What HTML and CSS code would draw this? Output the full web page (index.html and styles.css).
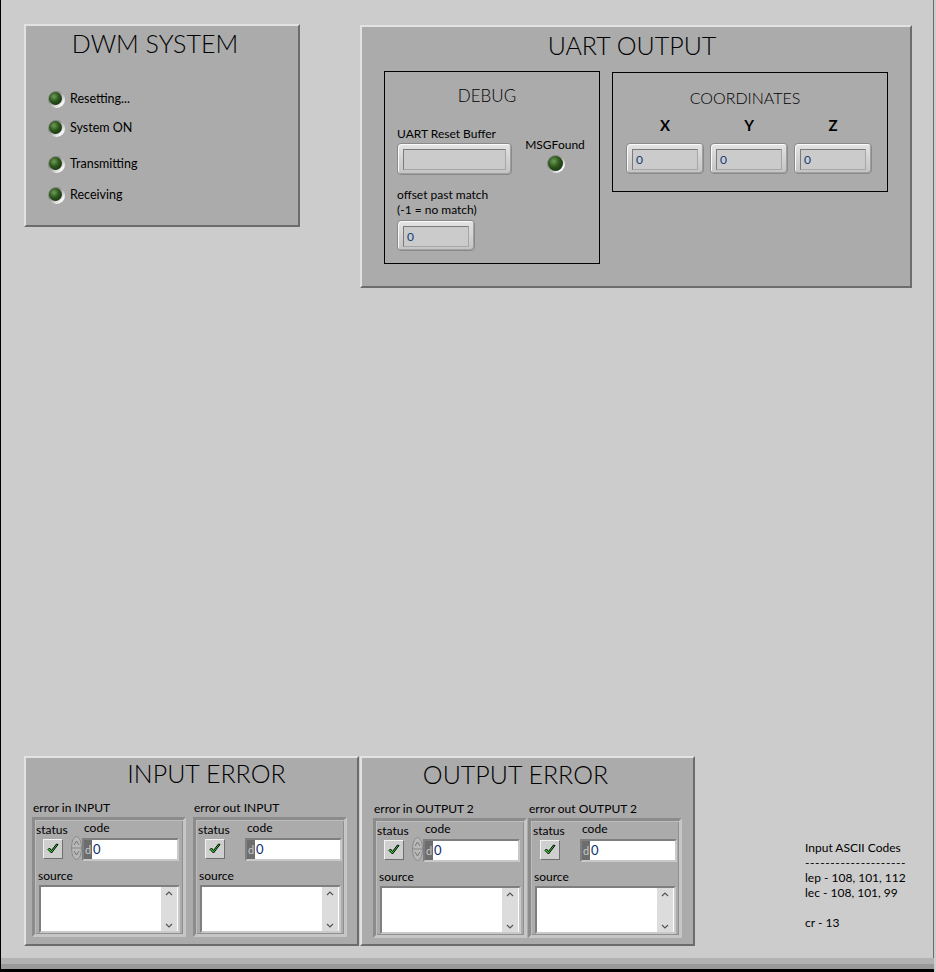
FILE: index.html
```html
<!DOCTYPE html>
<html lang="en">
<head>
<meta charset="utf-8">
<title>DWM System</title>
<link rel="stylesheet" href="styles.css">
</head>
<body>
<div class="window">
  <div class="top-row">
    <section class="deco dwm">
      <h1 class="title dwm-title">DWM SYSTEM</h1>
      <div class="led-row r1"><span class="led"><span class="led-core"></span></span><span class="lbl">Resetting...</span></div>
      <div class="led-row r2"><span class="led"><span class="led-core"></span></span><span class="lbl">System ON</span></div>
      <div class="led-row r3"><span class="led"><span class="led-core"></span></span><span class="lbl">Transmitting</span></div>
      <div class="led-row r4"><span class="led"><span class="led-core"></span></span><span class="lbl">Receiving</span></div>
    </section>

    <section class="deco uart">
      <h1 class="title uart-title">UART OUTPUT</h1>
      <div class="uart-boxes">
        <div class="box debug">
          <h2 class="sub-title debug-title">DEBUG</h2>
          <div class="debug-body">
            <div class="debug-left">
              <div class="lbl">UART Reset Buffer</div>
              <div class="ctl ctl-wide"><div class="ctl-field"></div></div>
              <div class="lbl offset-lbl">offset past match<br>(-1 = no match)</div>
              <div class="ctl ctl-num"><div class="ctl-field"><span class="val">0</span></div></div>
            </div>
            <div class="debug-right">
              <div class="lbl">MSGFound</div>
              <span class="led led-big"><span class="led-core"></span></span>
            </div>
          </div>
        </div>
        <div class="box coords">
          <h2 class="sub-title coord-title">COORDINATES</h2>
          <div class="axis-row">
            <div class="axis"><div class="axis-lbl">X</div><div class="ctl ctl-num"><div class="ctl-field"><span class="val">0</span></div></div></div>
            <div class="axis"><div class="axis-lbl">Y</div><div class="ctl ctl-num"><div class="ctl-field"><span class="val">0</span></div></div></div>
            <div class="axis"><div class="axis-lbl">Z</div><div class="ctl ctl-num"><div class="ctl-field"><span class="val">0</span></div></div></div>
          </div>
        </div>
      </div>
    </section>
  </div>

  <div class="bottom-row">
    <section class="deco err-panel err-in-panel">
      <h1 class="title err-title in-title">INPUT ERROR</h1>
      <div class="clusters">
        <div class="cluster-wrap">
          <div class="lbl cl-lbl">error in INPUT</div>
          <div class="cluster">
            <div class="cl-top">
              <div class="st-col"><div class="lbl">status</div><div class="chk"><svg viewBox="0 0 14 14" width="14" height="14"><path d="M2 7.5 L5.5 11 L12 2.5 L10.5 2 L5.5 8.5 L3.5 6 Z" fill="#22dd22" stroke="#000" stroke-width="1" stroke-linejoin="round"/></svg></div></div>
              <div class="spin"><svg viewBox="0 0 11 24" width="11" height="24"><ellipse cx="5.5" cy="12" rx="5" ry="11.5" fill="#b8b8b8" stroke="#8a8a8a"/><path d="M3 9 L5.5 5 L8 9" fill="none" stroke="#777"/><path d="M3 15 L5.5 19 L8 15" fill="none" stroke="#777"/><line x1="1" y1="12" x2="10" y2="12" stroke="#888"/></svg></div>
              <div class="code-col"><div class="lbl code-lbl">code</div><div class="code-field"><span class="radix">d</span><span class="code-val">0</span></div></div>
            </div>
            <div class="lbl src-lbl">source</div>
            <div class="src-box"><div class="sb"><svg viewBox="0 0 16 47" width="16" height="47"><path d="M5 10 L8 7 L11 10" fill="none" stroke="#555" stroke-width="1.2"/><path d="M5 39 L8 42 L11 39" fill="none" stroke="#555" stroke-width="1.2"/></svg></div></div>
          </div>
        </div>
        <div class="cluster-wrap">
          <div class="lbl cl-lbl">error out INPUT</div>
          <div class="cluster out">
            <div class="cl-top">
              <div class="st-col"><div class="lbl">status</div><div class="chk"><svg viewBox="0 0 14 14" width="14" height="14"><path d="M2 7.5 L5.5 11 L12 2.5 L10.5 2 L5.5 8.5 L3.5 6 Z" fill="#22dd22" stroke="#000" stroke-width="1" stroke-linejoin="round"/></svg></div></div>
              <div class="spin-gap"></div>
              <div class="code-col"><div class="lbl code-lbl">code</div><div class="code-field"><span class="radix">d</span><span class="code-val">0</span></div></div>
            </div>
            <div class="lbl src-lbl">source</div>
            <div class="src-box"><div class="sb"><svg viewBox="0 0 16 47" width="16" height="47"><path d="M5 10 L8 7 L11 10" fill="none" stroke="#555" stroke-width="1.2"/><path d="M5 39 L8 42 L11 39" fill="none" stroke="#555" stroke-width="1.2"/></svg></div></div>
          </div>
        </div>
      </div>
    </section>

    <section class="deco err-panel err-out-panel">
      <h1 class="title err-title out-title">OUTPUT ERROR</h1>
      <div class="clusters">
        <div class="cluster-wrap">
          <div class="lbl cl-lbl">error in OUTPUT 2</div>
          <div class="cluster">
            <div class="cl-top">
              <div class="st-col"><div class="lbl">status</div><div class="chk"><svg viewBox="0 0 14 14" width="14" height="14"><path d="M2 7.5 L5.5 11 L12 2.5 L10.5 2 L5.5 8.5 L3.5 6 Z" fill="#22dd22" stroke="#000" stroke-width="1" stroke-linejoin="round"/></svg></div></div>
              <div class="spin"><svg viewBox="0 0 11 24" width="11" height="24"><ellipse cx="5.5" cy="12" rx="5" ry="11.5" fill="#b8b8b8" stroke="#8a8a8a"/><path d="M3 9 L5.5 5 L8 9" fill="none" stroke="#777"/><path d="M3 15 L5.5 19 L8 15" fill="none" stroke="#777"/><line x1="1" y1="12" x2="10" y2="12" stroke="#888"/></svg></div>
              <div class="code-col"><div class="lbl code-lbl">code</div><div class="code-field"><span class="radix">d</span><span class="code-val">0</span></div></div>
            </div>
            <div class="lbl src-lbl">source</div>
            <div class="src-box"><div class="sb"><svg viewBox="0 0 16 47" width="16" height="47"><path d="M5 10 L8 7 L11 10" fill="none" stroke="#555" stroke-width="1.2"/><path d="M5 39 L8 42 L11 39" fill="none" stroke="#555" stroke-width="1.2"/></svg></div></div>
          </div>
        </div>
        <div class="cluster-wrap">
          <div class="lbl cl-lbl">error out OUTPUT 2</div>
          <div class="cluster out">
            <div class="cl-top">
              <div class="st-col"><div class="lbl">status</div><div class="chk"><svg viewBox="0 0 14 14" width="14" height="14"><path d="M2 7.5 L5.5 11 L12 2.5 L10.5 2 L5.5 8.5 L3.5 6 Z" fill="#22dd22" stroke="#000" stroke-width="1" stroke-linejoin="round"/></svg></div></div>
              <div class="spin-gap"></div>
              <div class="code-col"><div class="lbl code-lbl">code</div><div class="code-field"><span class="radix">d</span><span class="code-val">0</span></div></div>
            </div>
            <div class="lbl src-lbl">source</div>
            <div class="src-box"><div class="sb"><svg viewBox="0 0 16 47" width="16" height="47"><path d="M5 10 L8 7 L11 10" fill="none" stroke="#555" stroke-width="1.2"/><path d="M5 39 L8 42 L11 39" fill="none" stroke="#555" stroke-width="1.2"/></svg></div></div>
          </div>
        </div>
      </div>
    </section>

    <div class="ascii">
      <div>Input ASCII Codes</div>
      <div class="dashes">--------------------</div>
      <div>lep - 108, 101, 112</div>
      <div>lec - 108, 101, 99</div>
      <div>&nbsp;</div>
      <div>cr - 13</div>
    </div>
  </div>

  <div class="footer-bar"></div>
</div>
</body>
</html>
```

FILE: styles.css
```css
* { box-sizing: border-box; }
html, body { margin: 0; padding: 0; background: #cccccc; }
body { font-family: Lato, "Open Sans", sans-serif; color: #000; }

.window {
  width: 936px;
  height: 972px;
  background: #cccccc;
  border-left: 1px solid #000;
  border-right: 2px solid #cccccc;
  box-shadow: inset -1px 0 0 #6a6a6a;
  display: flex;
  flex-direction: column;
}

.deco {
  background: #ababab;
  border: 2px solid;
  border-color: #e2e2e2 #6c6c6c #6c6c6c #e2e2e2;
}

.title {
  margin: 0;
  font-weight: 300;
  font-size: 25px;
  line-height: 30px;
  text-align: center;
  white-space: nowrap;
  color: #000;
}

.lbl { font-size: 12px; line-height: 15px; white-space: nowrap; }

/* top row */
.top-row { display: flex; align-items: flex-start; padding: 24px 0 0 23px; }

.dwm { width: 276px; height: 203px; padding: 2px 0 0 22px; }
.dwm-title { padding-right: 36px; }

.led-row { display: flex; align-items: center; gap: 5px; height: 16px; }
.led-row .lbl { line-height: 16px; font-size: 12.5px; }
.r1 { margin-top: 33px; }
.r2 { margin-top: 13px; }
.r3 { margin-top: 20px; }
.r4 { margin-top: 15px; }

.led {
  width: 17px; height: 17px; border-radius: 50%;
  background: linear-gradient(135deg, #6a6a6a 0%, #959595 40%, #f4f4f4 78%);
  display: flex; align-items: center; justify-content: center;
  flex: none;
}
.led-core {
  width: 13px; height: 13px; border-radius: 50%;
  background: radial-gradient(circle at 38% 35%, #6f9d58 0%, #2f5a1d 40%, #183510 75%, #0f220a 100%);
  margin: -2px 0 0 -2px;
}
.led-big { width: 18px; height: 18px; }
.led-big .led-core { width: 15px; height: 15px; }

.uart { width: 552px; height: 263px; margin: 1px 0 0 60px; padding: 3px 0 0 22px; }
.uart-title { padding-right: 30px; }

.uart-boxes { display: flex; align-items: flex-start; margin-top: 11px; }
.box { border: 1px solid #000; }
.debug { width: 216px; height: 193px; padding-top: 13px; }
.coords { width: 276px; height: 120px; margin: 1px 0 0 12px; padding-top: 14px; }

.sub-title { margin: 0; font-weight: 300; font-size: 17px; line-height: 22px; text-align: center; white-space: nowrap; color: #000; }
.debug-title { padding-right: 10px; }
.coord-title { padding-right: 10px; font-size: 16px; }

.debug-body { display: flex; margin-top: 19px; padding-left: 12px; }
.debug-left { width: 128px; }
.debug-right { display: flex; flex-direction: column; align-items: center; margin-top: 11px; width: 60px; }
.debug-right .led { margin-top: 3px; margin-left: 2px; }

.ctl {
  border: 1px solid #8a8a8a;
  border-radius: 4px;
  background: linear-gradient(#e4e4e4, #cfcfcf 60%, #c4c4c4);
  box-shadow: inset 1px 1px 0 #fafafa, inset -1px -1px 0 #a0a0a0;
  padding: 5px 5px 4px 5px;
  flex: none;
}
.ctl-field {
  height: 21px;
  background: #cbcbcb;
  border: 1px solid;
  border-color: #7a7a7a #a6a6a6 #a6a6a6 #7a7a7a;
  font-size: 12px;
  line-height: 19px;
  padding-left: 3px;
}
.ctl-wide { width: 115px; height: 32px; margin-top: 2px; }
.ctl-num { width: 78px; height: 31px; }
.val { color: #123a7a; }
.offset-lbl { margin-top: 12px; }
.debug-left .ctl-num { margin-top: 3px; }

.axis-row { display: flex; gap: 6px; padding-left: 13px; margin-top: 7px; }
.axis { width: 78px; display: flex; flex-direction: column; align-items: center; }
.axis-lbl { font-weight: 700; font-size: 15px; line-height: 18px; margin-bottom: 9px; }

/* bottom row */
.bottom-row { display: flex; align-items: flex-start; padding-left: 23px; margin-top: 468px; }
.err-panel { width: 335px; height: 190px; }
.err-out-panel { margin-left: 1px; }
.err-title { margin-top: 0; }
.in-title { padding-left: 30px; }
.out-title { padding-right: 24px; padding-top: 1px; }

.clusters { display: flex; gap: 7px; margin-top: 12px; }
.err-in-panel .clusters { padding-left: 6px; }
.err-out-panel .clusters { padding-left: 11px; gap: 1px; }

.cl-lbl { padding-left: 1px; margin-bottom: 2px; }
.cluster {
  width: 154px;
  height: 120px;
  border: 3px solid;
  border-color: #8c8c8c #c6c6c6 #c6c6c6 #8c8c8c;
  box-shadow: inset 1px 1px 0 #bdbdbd, inset -1px -1px 0 #8f8f8f;
  padding: 2px 0 0 1px;
}
.cl-top { display: flex; align-items: flex-start; }
.st-col { width: 35px; }
.chk {
  width: 20px; height: 20px; margin: 2px 0 0 7px;
  background: #cfcfcf;
  border: 1px solid;
  border-color: #f2f2f2 #6f6f6f #6f6f6f #f2f2f2;
  display: flex; align-items: center; justify-content: center;
}
.spin { width: 11px; height: 24px; margin-top: 14px; }
.spin-gap { width: 11px; }
.cluster.out .st-col { margin-left: 1px; }
.cluster.out .spin-gap { width: 12px; }
.code-col { display: flex; flex-direction: column; }
.code-lbl { padding-left: 2px; margin-top: -2px; margin-bottom: 3px; }
.code-field {
  width: 97px; height: 23px;
  border: 2px solid;
  border-color: #7f7f7f #c9c9c9 #c9c9c9 #7f7f7f;
  display: flex;
  background: #fff;
}
.radix { width: 8px; background: #6d6d6d; color: #c8c8c8; font-size: 11px; line-height: 19px; padding-left: 1px; }
.code-val { color: #0d2f70; font-size: 13px; line-height: 19px; padding-left: 1px; }

.src-lbl { margin-top: 7px; padding-left: 2px; }
.src-box {
  width: 141px; height: 48px;
  margin: 2px 0 0 3px;
  border: 2px solid;
  border-color: #7f7f7f #c9c9c9 #c9c9c9 #7f7f7f;
  background: #fff;
  display: flex; justify-content: flex-end;
}
.sb { width: 16px; height: 44px; background: #dcdcdc; margin-right: 1px; overflow: hidden; }
.sb svg { display: block; margin-top: -2px; }

.ascii { margin: 84px 0 0 110px; font-size: 12px; line-height: 15px; white-space: nowrap; }
.dashes { letter-spacing: 0.6px; }

.footer-bar {
  margin-top: auto;
  height: 14px;
  background: linear-gradient(#b2b2b2 0, #b2b2b2 6px, #999 6px, #999 11px, #000 11px);
}
```
